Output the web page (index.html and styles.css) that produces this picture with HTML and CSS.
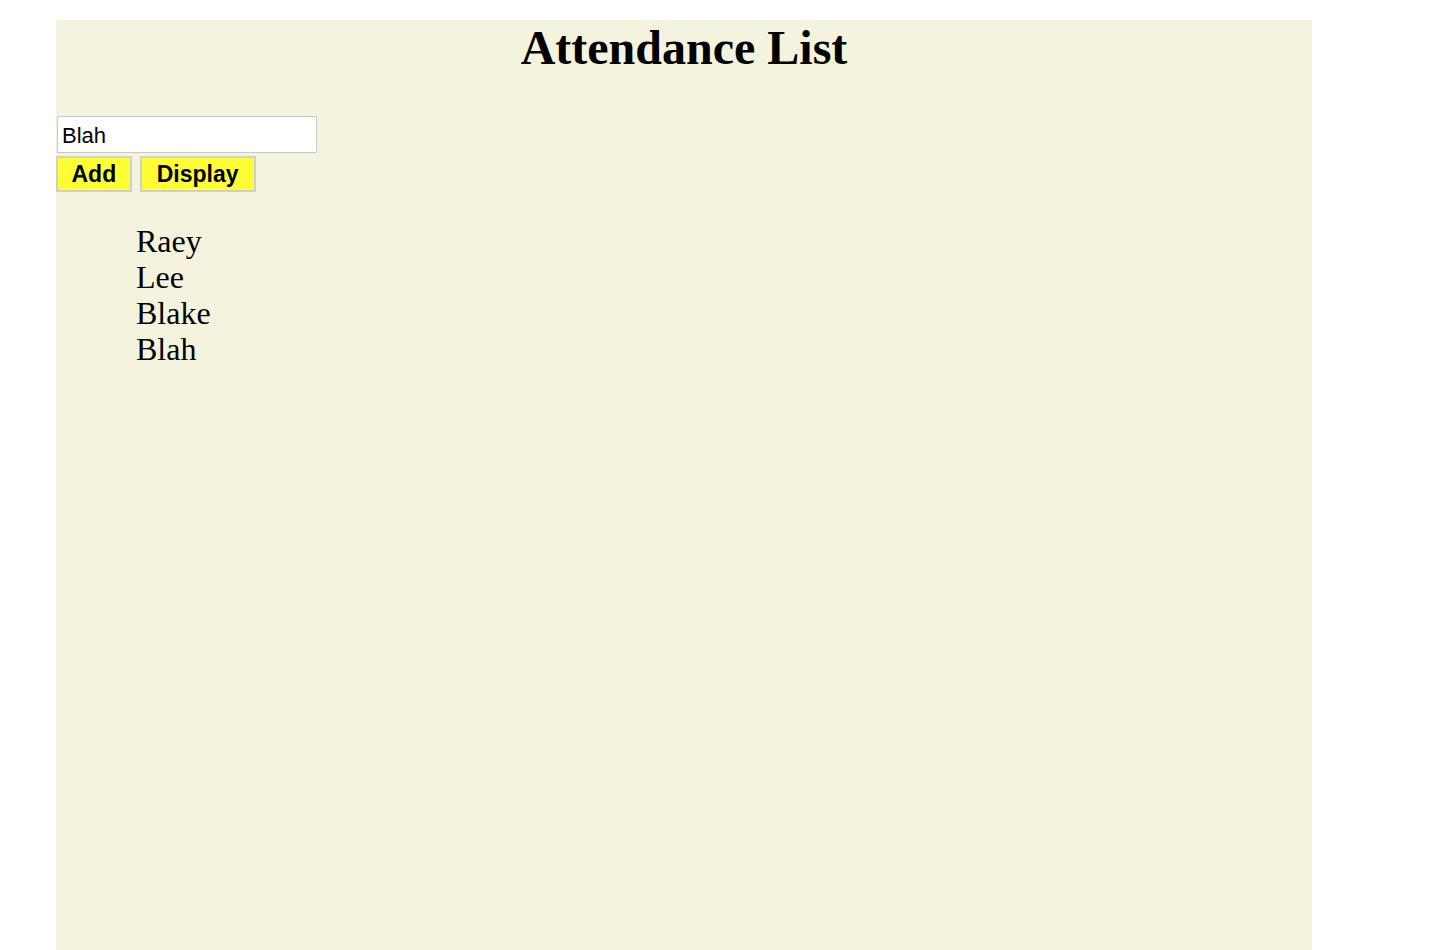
FILE: index.html
```html
<!DOCTYPE html>
<html>
<head>
<meta charset="utf-8">
<link rel="stylesheet" href="styles.css">
</head>
<body>
<div class="page">
  <h1 class="title">Attendance List</h1>
  <div class="form">
    <input class="name-input" type="text" value="Blah">
    <div class="actions">
      <button class="btn">Add</button>
      <button class="btn">Display</button>
    </div>
  </div>
  <ul class="names">
    <li>Raey</li>
    <li>Lee</li>
    <li>Blake</li>
    <li>Blah</li>
  </ul>
</div>
</body>
</html>
```
FILE: styles.css
```css
html, body {
  margin: 0;
  padding: 0;
  background: #ffffff;
}
body {
  padding: 20px 0 0 56px;
  font-family: "Liberation Serif", "Times New Roman", serif;
}
.page {
  width: 1256px;
  height: 930px;
  background: #f4f4de;
  display: flex;
  flex-direction: column;
}
.title {
  margin: 0;
  text-align: center;
  font-size: 48px;
  font-weight: bold;
  line-height: 55px;
  color: #000;
}
.form {
  margin-top: 41px;
  display: flex;
  flex-direction: column;
  gap: 3px;
}
.name-input {
  box-sizing: border-box;
  width: 260px;
  height: 37px;
  margin: 0 0 0 1px;
  border: 1px solid #c8c8c8;
  background: #fff;
  padding: 3px 5px 0 4px;
  font-family: "Liberation Sans", Arial, sans-serif;
  font-size: 22px;
  color: #000;
  outline: none;
}
.actions {
  display: flex;
  gap: 8px;
}
.btn {
  box-sizing: border-box;
  height: 36px;
  margin: 0;
  padding: 0 15px;
  background: #ffff33;
  border: 2px solid #cfcfcf;
  font-family: "Liberation Sans", Arial, sans-serif;
  font-weight: bold;
  font-size: 23px;
  color: #000;
}
.btn:first-child {
  padding: 0 13.5px;
}
.names {
  list-style: none;
  margin: 31px 0 0 0;
  padding: 0 0 0 80px;
  font-size: 32px;
  line-height: 36px;
  color: #000;
}
```
